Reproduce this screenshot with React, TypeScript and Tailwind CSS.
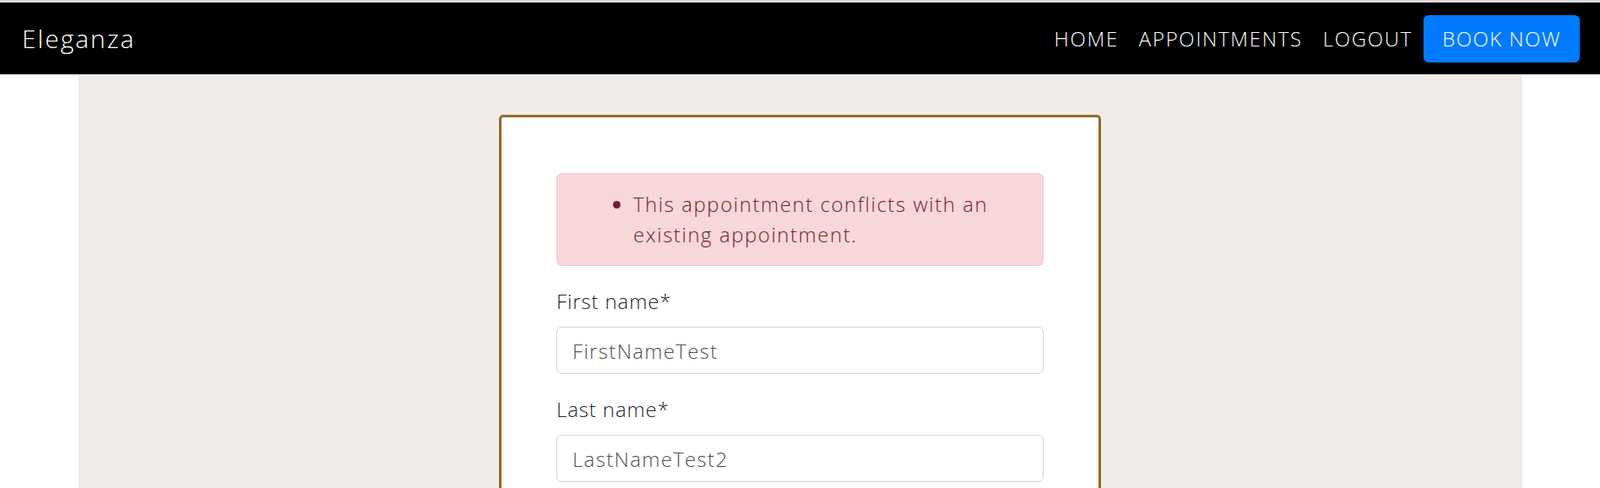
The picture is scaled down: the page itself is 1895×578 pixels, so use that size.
import React from "react";

const font = { fontFamily: "'Open Sans', 'DejaVu Sans', sans-serif" };

export default function App() {
  return (
    <div className="min-h-screen bg-white font-light" style={font}>
      <div className="h-[3px] bg-[#dcdcdc]" />
      <nav className="flex h-[85px] items-center justify-between bg-black pl-[26px] pr-[24px]">
        <a className="text-[30px] leading-none tracking-[0.065em] text-white">Eleganza</a>
        <div className="flex items-center text-[24px] tracking-[0.07em] text-white">
          <a className="px-[12px]">HOME</a>
          <a className="px-[12px]">APPOINTMENTS</a>
          <a className="px-[12px]">LOGOUT</a>
          <button className="ml-[1px] flex h-[56px] w-[185px] items-center justify-center rounded-[6px] bg-[#007bff] tracking-[0.06em]">
            BOOK NOW
          </button>
        </div>
      </nav>
      <div className="mx-auto min-h-[490px] w-[1710px] bg-[#f0ebe7] pt-[48px]">
        <div className="mx-auto w-[713px] rounded-[5px] border-[3px] border-[#94682c] bg-white px-[65px] pt-[66px] pb-[40px] tracking-[0.055em]">
          <div className="mb-[24px] rounded-[6px] border border-[#f5c6cb] bg-[#f8d7da] py-[18px] pl-[42px] pr-[30px] text-[#721c24]">
            <ul className="list-disc pl-[48px] text-[24px] leading-[36px] tracking-[0.064em] marker:text-[#721c24]">
              <li>This appointment conflicts with an existing appointment.</li>
            </ul>
          </div>
          <div className="mb-[24px]">
            <label className="mb-[12px] block text-[24px] leading-[36px] text-[#212529]">First name*</label>
            <input
              readOnly
              value="FirstNameTest"
              className="block h-[56px] w-full rounded-[6px] border border-[#ced4da] bg-white px-[18px] text-[24px] tracking-[0.055em] text-[#495057] outline-none"
            />
          </div>
          <div className="mb-[24px]">
            <label className="mb-[12px] block text-[24px] leading-[36px] text-[#212529]">Last name*</label>
            <input
              readOnly
              value="LastNameTest2"
              className="block h-[56px] w-full rounded-[6px] border border-[#ced4da] bg-white px-[18px] text-[24px] tracking-[0.055em] text-[#495057] outline-none"
            />
          </div>
        </div>
      </div>
    </div>
  );
}
